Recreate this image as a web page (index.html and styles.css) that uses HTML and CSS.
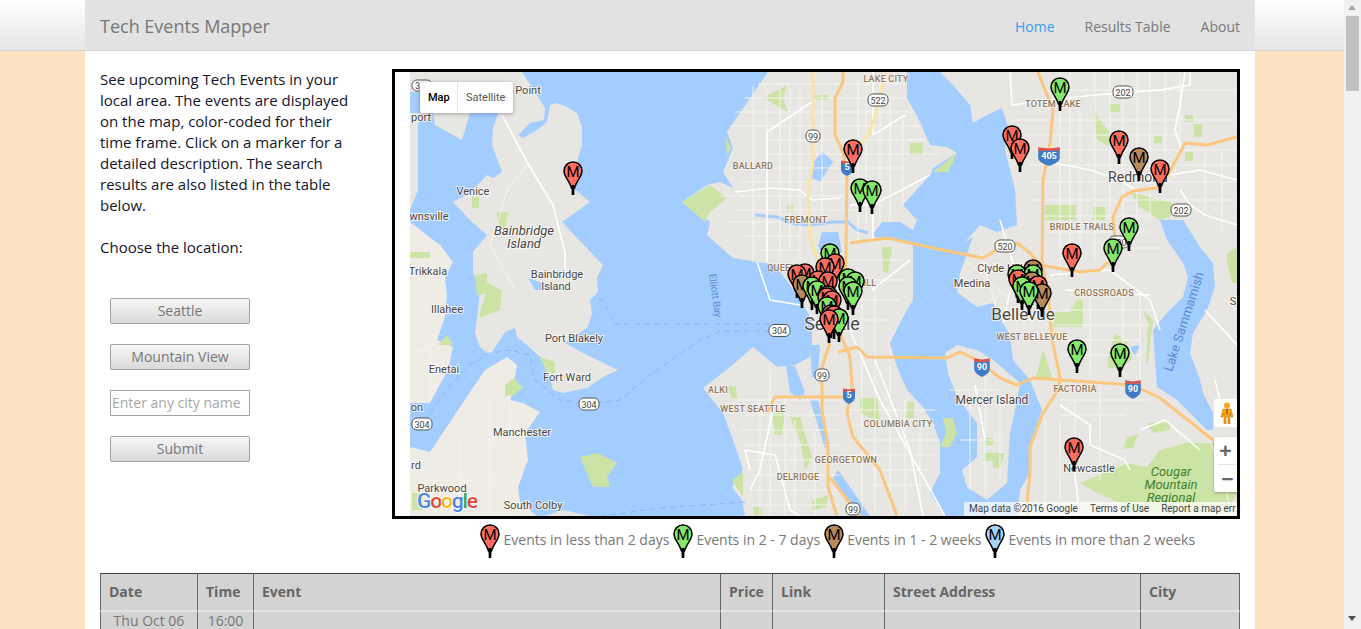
FILE: index.html
```html
<!DOCTYPE html>
<html lang="en">
<head>
  <meta charset="UTF-8">
  <title>Tech Events Mapper</title>
  <link rel="stylesheet" href="styles.css">
</head>
<body>
  <div class="page">
    <nav class="navbar">
      <div class="nav-inner">
        <a class="brand">Tech Events Mapper</a>
        <ul class="nav-links">
          <li class="active">Home</li>
          <li>Results Table</li>
          <li>About</li>
        </ul>
      </div>
    </nav>

    <div class="container">
      <div class="row">
        <div class="intro">
          <p>See upcoming Tech Events in your local area. The events are displayed on the map, color-coded for their time frame. Click on a marker for a detailed description. The search results are also listed in the table below.<br><br>Choose the location:</p>
          <div class="controls">
            <button>Seattle</button>
            <button>Mountain View</button>
            <input type="text" placeholder="Enter any city name">
            <button>Submit</button>
          </div>
        </div>

        <div class="map-col">
          <div class="map-box">
            <div class="map">
              <svg class="map-svg" width="827" height="444" viewBox="410 72 827 444">
                <defs>
                  <g id="pin">
                    <path class="pin-body" d="M10 1C4.800 1 1 5 1 10c0 5.500 5 9 7.500 17h3C14 19 19 15.500 19 10 19 5 15.200 1 10 1z"/>
                    <path class="pin-stem" d="M8.500 24h3l-.2 10H8.700z"/>
                    <text class="pin-m" x="10" y="15.500">M</text>
                  </g>
                  <g id="i5">
                    <path class="sh-blue" d="M-6-4H6V2C6 6 2 8 0 9-2 8-6 6-6 2z"/>
                    <path class="sh-red" d="M-6-6.500 0-5.500 6-6.500V-3.500H-6z"/>
                  </g>
                </defs>

                <!-- land -->
                <g class="land">
                  <path d="M410 72H500L505 82V113H470L462 140 453 135 435 125 433 113H420V92H410z"/>
                  <path d="M410 113H430V118L418 122V190L410 210z"/>
                  <path class="land-light" d="M410 222 423 232 440 245 453 262 445 278 447 295 445 317 437 340 453 347 448 370 437 390 430 403H410z"/>
                  <path class="land-light" d="M410 447 430 452 440 437 460 407 485 370 507 357 517 365 513 387 510 400 523 403 540 412 525 433 528 460 518 487 520 503 537 516H410z"/>
                  <path d="M563 510 590 516H545z"/>
                  <path d="M498 72H522L537 95 545 108 544 120 530 123 518 135 523 138 537 130 547 122 550 105 557 103 567 107 577 113 582 127 582 145 578 158 574 178 573 188 590 202 562 222 577 238 603 265 597 278 598 292 590 300 592 313 588 327 565 343 583 353 618 370 603 377 587 388 563 393 553 390 550 378 540 357 527 345 517 337 515 328 505 332 490 355 480 347 475 333 478 310 480 290 473 272 473 252 487 235 472 222 453 202 470 193 487 175 493 178 502 172 492 145 493 128 500 108 498 85z"/>
                  <path d="M768 72 757 88 727 132 733 148 723 172 733 188 720 182 707 185 682 202 710 222 707 235 733 258 757 262 775 265 790 285 800 300 812 320 812 340 810 357 795 365 777 367 753 347 730 367 703 388 723 413 733 440 743 470 732 487 742 500 745 516H945L930 493 940 473 940 443 933 423 923 407 907 390 897 367 890 343 903 317 913 300V242L880 238 872 236 882 222 900 222 913 230 917 220 903 205 930 175 933 168 957 153 947 147 930 145 920 122 907 98 907 72z"/>
                  <path d="M945 353 957 345 977 350 993 360 1020 383 1017 400 1010 433 1007 483 987 500 967 487 962 470 977 457 977 423 957 397 948 373z"/>
                  <path d="M940 72 953 85 970 105 973 123 987 115 1002 108 1008 127 1005 150 1010 170 1015 190 1017 225 997 232 980 225 965 242 973 237 960 273 957 292 977 307 993 303 1003 323 1017 347 1010 335 1013 360 1030 380 1042 410 1032 440 1030 473 1020 490 1017 516H1237V72z"/>
                </g>

                <!-- water on the land -->
                <g class="water">
                  <path d="M823 152 833 162 820 182 812 178 813 162z"/>
                  <path d="M528 278 545 284 568 290H535z"/>
                  <path d="M1160 220H1183L1200 247 1213 263 1215 287 1207 310 1193 333 1190 353 1200 380 1203 393 1213 413 1213 430H1207L1177 400 1157 387 1155 360 1153 330 1167 313 1183 297 1188 277 1183 263 1167 240z"/>
                  <path d="M1130 347 1140 345 1135 357z"/>
                  <path d="M810 345H820L818 375 812 378z"/>
                  <path d="M786 366 795 366 805 392 800 400 790 392z"/>
                  <path d="M810 400 818 400 830 445 825 448z"/>
                  <path d="M838 470 870 516H858L833 478z"/>
                  <path d="M822 232 838 232 842 252 826 262 818 246z"/>
                </g>
                <polyline class="canal" points="755,215 777,217 795,224 810,225 833,222 848,222 857,230 868,233"/>
                <polyline class="ferry" points="780,331 720,331 700,340 650,375 620,400 589,404 560,400 535,380 530,355 510,350 490,353 470,365 450,385 422,424"/>
                <polyline class="ferry" points="780,324 615,324 605,305 598,296"/>
                <polyline class="ferry" points="600,516 660,508 745,502"/>

                <!-- parks -->
                <g class="park">
                  <path d="M580 457 598 453 617 463 607 477 610 487 593 487z"/>
                  <path d="M682 202 710 185 727 198 710 212 705 222z"/>
                  <path d="M763 98 787 85 783 98 788 112 767 100z"/>
                  <path d="M725 135 731 148 727 155z"/>
                  <path d="M933 172 957 153 948 172z"/>
                  <path d="M910 143H923L922 155H910z"/>
                  <path d="M812 95H828V100H812z"/>
                  <path d="M497 212H508L505 228H497z"/>
                  <path d="M472 197H479V208H472z"/>
                  <path d="M475 275 487 273V282L503 292 477 295z"/>
                  <path d="M487 290H502L500 310 480 318V312z"/>
                  <path d="M505 385 513 378 523 387 513 396H505z"/>
                  <path d="M540 357 555 362V373H547z"/>
                  <path d="M438 345 447 335 453 345z"/>
                  <path d="M412 493H423V510H412z"/>
                  <path d="M410 252H430V258H410z"/>
                  <path d="M728 387 736 386 737 398 731 398z"/>
                  <path d="M772 413H785L782 435H775z"/>
                  <path d="M790 417H800L812 457 805 470 800 440z"/>
                  <path d="M732 480 743 472V497z"/>
                  <path d="M812 500 828 495 827 507 813 510z"/>
                  <path d="M753 507H762V516H755z"/>
                  <path d="M860 398H877L880 420 868 417 860 412z"/>
                  <path d="M908 402H914V418H906z"/>
                  <path d="M943 418H953L957 433 950 447H940L946 433z"/>
                  <path d="M985 438H993V445H985z"/>
                  <path d="M985 453H1005L1002 461 1000 468H993V461H985z"/>
                  <path d="M882 247H892L888 273 883 272z"/>
                  <path d="M787 205H793V212H787z"/>
                  <path d="M1093 110 1100 120 1110 133V147L1097 140z"/>
                  <path d="M1109 104H1120V112H1109z"/>
                  <path d="M1185 115H1193V122H1185z"/>
                  <path d="M1194 124H1202V137H1194z"/>
                  <path d="M1154 136H1162V143H1154z"/>
                  <path d="M1185 152 1193 152 1193 161 1185 161z"/>
                  <path d="M1130 192 1140 207 1160 220 1170 217 1173 203 1160 200z"/>
                  <path d="M1045 205H1076V220H1045z"/>
                  <path d="M1093 207H1105V220H1093z"/>
                  <path d="M1077 300H1083V327H1053L1055 312H1070z"/>
                  <path d="M1143 310 1153 320 1148 363H1146L1148 323z"/>
                  <path d="M1115 333 1127 343 1133 357 1123 368H1108V357z"/>
                  <path d="M1043 350 1053 380H1035z"/>
                  <path d="M1080 483 1127 463 1147 467 1160 450 1187 443 1213 443 1237 447V493L1227 513H1133L1113 500 1097 493z"/>
                  <path d="M1147 423 1170 422V430L1153 433z"/>
                  <path d="M1127 437 1138 435 1133 448 1123 449z"/>
                  <path d="M1227 253 1237 247V283H1232L1227 263z"/>
                </g>

                <!-- small streets -->
                <path class="street" d="M758 84H905M745 98H905M735 112H915M730 126H920M770 140H925M767 154H940M740 168H905M740 182H890M720 196H880M735 210H860M725 222H780M745 236H800M760 250H800M753 86V262M767 88V262M780 88V262M790 88V250M800 88V262M822 95V220M858 80V240M866 80V230M880 80V220M890 100V220M903 115V205M838 260H905M838 280H905M850 300H900M860 320H890M862 280V510M875 285V510M890 350V510M905 400V510M920 420V500M850 410H935M850 425H935M850 440H940M850 455H935M870 470H930M870 485H930M735 400H840M745 415H840M740 430H840M745 445H840M750 460H840M750 475H840M750 490H840M750 505H840M770 370V516M760 400V516M785 400V516M795 420V516M815 430V516M430 340V400M415 350H430M418 280H440M460 440V516H518M460 440H510M490 400V516M410 480H520M510 395V440M1045 90H1237M1012 120H1237M1010 135H1180M1020 150H1237M1030 165H1237M1030 182H1237M1030 200H1237M1040 216H1150M1040 232H1150M1120 248H1160M1060 72V280M1070 72V260M1080 110V260M1095 72V260M1110 72V220M1123 72V240M1137 72V220M1150 72V220M1165 72V160M1180 72V150M1205 150V210M1222 150V230M1070 295H1150M1060 310H1150M1055 325H1150M1050 340H1140M1060 355H1140M1060 400H1150M1060 415H1125M1100 380V480M1075 400V470M1090 285V375M1123 285V375M1140 290V380M950 390H1000M970 400V490M985 375V495M1000 400V480M960 440H1005M1225 300 1237 310M1210 440 1230 505M1045 420V516M1060 420V500M980 250 1000 320M965 260 1010 300"/>

                <!-- main streets -->
                <g class="road">
                  <polyline points="502,115 527,162 553,205 565,252 565,278"/>
                  <polyline points="767,132 815,100"/>
                  <polyline points="767,132 767,262"/>
                  <polyline points="767,188 800,190 812,200 840,198"/>
                  <polyline points="735,192 770,188"/>
                  <polyline points="873,72 873,135 905,115"/>
                  <polyline points="850,205 873,205 930,175"/>
                  <polyline points="873,205 873,240"/>
                  <polyline points="757,262 770,300 800,305"/>
                  <polyline points="850,330 880,400 925,480 945,516"/>
                  <polyline points="875,360 910,450 923,516"/>
                  <polyline points="872,290 910,260"/>
                  <polyline points="750,470 745,450 775,455 790,510 800,516"/>
                  <polyline points="775,400 760,470 750,490"/>
                  <polyline points="1010,72 1012,105 1050,100 1095,95 1160,90 1190,85 1190,72"/>
                  <polyline points="1040,160 1090,170 1120,180 1135,190"/>
                  <polyline points="1170,175 1200,170 1237,180"/>
                  <polyline points="1180,190 1190,205 1205,215 1237,225"/>
                  <polyline points="1185,72 1180,105 1175,130 1182,150"/>
                  <polyline points="1050,275 1110,270 1150,300 1160,330"/>
                  <polyline points="1065,290 1150,295"/>
                  <polyline points="1205,310 1237,345"/>
                  <polyline points="1215,380 1225,420 1237,420"/>
                  <polyline points="1060,405 1090,425 1090,445 1125,460 1130,470"/>
                  <polyline points="1140,430 1165,420 1200,450"/>
                  <polyline points="1072,450 1078,500 1075,516"/>
                  <polyline points="1000,220 1015,270 1003,323"/>
                  <polyline points="975,385 985,440"/>
                </g>
                <polyline class="street" points="527,165 507,190 497,225 490,245 515,290"/>

                <!-- highways -->
                <g class="hwy">
                  <polyline points="843,72 843,82 835,98 835,135 843,152 847,172 846,252 845,300"/>
                  <polyline points="840,333 850,357 852,387 847,413 853,437 880,470 897,516"/>
                  <polyline points="850,243 887,238 933,248 983,258 997,250 1017,243 1030,253 1040,265 1080,272 1100,270 1110,260 1115,240 1113,217 1122,197 1133,191 1157,188 1167,177 1185,143 1207,145 1237,137"/>
                  <polyline points="1038,72 1053,110 1050,143 1043,180 1042,265 1048,290 1052,340 1060,377 1058,390 1043,413 1030,447 1030,473 1027,503 1027,516"/>
                  <polyline points="838,352 857,347 867,357 947,358 960,352 977,360 1000,378 1017,385 1033,378 1133,385 1160,398 1213,440"/>
                  <polyline points="843,397 775,397 768,412"/>
                  <polyline points="830,343 822,367 822,410 828,447 828,487 837,516"/>
                  <polyline points="830,478 860,516"/>
                </g>
                <g class="hwy-light">
                  <polyline points="813,72 813,165 808,188 810,238 815,252 825,290"/>
                  <polyline points="885,72 877,108 870,132 860,145"/>
                </g>

                <!-- highway shields -->
                <g class="shield">
                  <rect x="412" y="80" width="20" height="11" rx="5"/>
                  <rect x="769" y="324.500" width="21" height="12" rx="5"/>
                  <rect x="579" y="398" width="20" height="12" rx="5"/>
                  <rect x="412" y="418" width="20" height="12" rx="5"/>
                  <rect x="806" y="130" width="14" height="12" rx="5"/>
                  <rect x="815" y="369" width="14" height="12" rx="5"/>
                  <rect x="846" y="503" width="14" height="12" rx="5"/>
                  <rect x="868" y="94" width="20" height="12" rx="5"/>
                  <rect x="995" y="240" width="20" height="12" rx="5"/>
                  <rect x="1113" y="86" width="20" height="12" rx="5"/>
                  <rect x="1171" y="204" width="20" height="12" rx="5"/>
                  <rect x="1109" y="236" width="20" height="12" rx="5"/>
                </g>
                <g class="shield-num">
                  <text x="420" y="89">30</text>
                  <text x="779.500" y="334">304</text>
                  <text x="589" y="407.500">304</text>
                  <text x="422" y="427.500">304</text>
                  <text x="813" y="139.500">99</text>
                  <text x="822" y="378.500">99</text>
                  <text x="853" y="512.500">99</text>
                  <text x="878" y="103.500">522</text>
                  <text x="1005" y="249.500">520</text>
                  <text x="1123" y="95.500">202</text>
                  <text x="1181" y="213.500">202</text>
                  <text x="1119" y="245.500">520</text>
                </g>
                <use href="#i5" x="847" y="167"/>
                <use href="#i5" x="849" y="395"/>
                <use href="#i5" transform="translate(1049 155) scale(1.800 1.200)"/>
                <use href="#i5" transform="translate(982 366) scale(1.300 1.200)"/>
                <use href="#i5" transform="translate(1133 388) scale(1.300 1.200)"/>
                <g class="shield-i">
                  <text x="847" y="170">5</text>
                  <text x="849" y="398">5</text>
                  <text x="1049" y="159">405</text>
                  <text x="982" y="370">90</text>
                  <text x="1133" y="392">90</text>
                </g>

                <!-- place names -->
                <g class="lbl">
                  <text x="528" y="94">Point</text>
                  <text x="421" y="121">port</text>
                  <text x="473" y="195">Venice</text>
                  <text x="429" y="220">wnsville</text>
                  <text x="428" y="275">Trikkala</text>
                  <text x="447" y="313">Illahee</text>
                  <text x="444" y="373">Enetai</text>
                  <text x="417" y="411">on</text>
                  <text x="416" y="469">rd</text>
                  <text x="442" y="492">Parkwood</text>
                  <text x="522" y="436">Manchester</text>
                  <text x="574" y="342">Port Blakely</text>
                  <text x="567" y="381">Fort Ward</text>
                  <text x="533" y="509">South Colby</text>
                  <text x="557" y="278">Bainbridge</text>
                  <text x="556" y="290">Island</text>
                  <text x="1000" y="272">Clyde Hill</text>
                  <text x="972" y="287">Medina</text>
                  <text x="1089" y="472">Newcastle</text>
                  <text x="1233" y="305">S</text>
                  <text class="lbl-md" x="992" y="404">Mercer Island</text>
                  <text class="lbl-rd" x="1138" y="182">Redmond</text>
                  <text class="lbl-sea" x="832" y="330">Seattle</text>
                  <text class="lbl-lg" x="1023" y="320">Bellevue</text>
                  <text class="lbl-it" x="524" y="235">Bainbridge</text>
                  <text class="lbl-it" x="524" y="248">Island</text>
                </g>
                <g class="hood">
                  <text x="753" y="169">BALLARD</text>
                  <text x="806" y="223">FREMONT</text>
                  <text x="782" y="271">QUEEN</text>
                  <text x="870" y="286">ILL</text>
                  <text x="886" y="82">LAKE CITY</text>
                  <text x="1053" y="107">TOTEM LAKE</text>
                  <text x="1082" y="230">BRIDLE TRAILS</text>
                  <text x="1104" y="296">CROSSROADS</text>
                  <text x="1032" y="340">WEST BELLEVUE</text>
                  <text x="1075" y="392">FACTORIA</text>
                  <text x="718" y="393">ALKI</text>
                  <text x="753" y="412">WEST SEATTLE</text>
                  <text x="898" y="427">COLUMBIA CITY</text>
                  <text x="846" y="463">GEORGETOWN</text>
                  <text x="798" y="480">DELRIDGE</text>
                </g>
                <g class="lbl-park">
                  <text x="1171" y="476">Cougar</text>
                  <text x="1171" y="489">Mountain</text>
                  <text x="1171" y="502">Regional</text>
                </g>
                <text class="lbl-water" transform="translate(1188 323) rotate(-72)">Lake Sammamish</text>
                <text class="lbl-water lbl-bay" transform="translate(712 296) rotate(82)">Elliott Bay</text>

                <!-- event markers -->
                <g class="red"><use href="#pin" x="563" y="161"/><use href="#pin" x="843" y="139"/><use href="#pin" x="1002" y="125"/><use href="#pin" x="1010" y="138"/><use href="#pin" x="1109" y="130"/></g>
                <use class="brown" href="#pin" x="1129" y="147"/>
                <use class="red" href="#pin" x="1150" y="159"/>
                <g class="green"><use href="#pin" x="1050" y="77"/><use href="#pin" x="850" y="178"/><use href="#pin" x="862" y="180"/><use href="#pin" x="1119" y="217"/><use href="#pin" x="1103" y="238"/><use href="#pin" x="1067" y="339"/><use href="#pin" x="1110" y="343"/></g>
                <use class="red" href="#pin" x="1062" y="243"/>
                <use class="red" href="#pin" x="1064" y="437"/>

                <use class="green" href="#pin" x="820" y="243"/>
                <use class="red" href="#pin" x="825" y="253"/>
                <use class="red" href="#pin" x="815" y="257"/>
                <use class="red" href="#pin" x="795" y="263"/>
                <use class="red" href="#pin" x="787" y="264"/>
                <use class="brown" href="#pin" x="792" y="274"/>
                <use class="green" href="#pin" x="838" y="268"/>
                <use class="green" href="#pin" x="845" y="271"/>
                <use class="green" href="#pin" x="838" y="276"/>
                <use class="green" href="#pin" x="843" y="281"/>
                <use class="red" href="#pin" x="808" y="270"/>
                <use class="red" href="#pin" x="818" y="271"/>
                <use class="green" href="#pin" x="802" y="276"/>
                <use class="green" href="#pin" x="807" y="280"/>
                <use class="brown" href="#pin" x="818" y="285"/>
                <use class="red" href="#pin" x="817" y="287"/>
                <use class="red" href="#pin" x="822" y="290"/>
                <use class="green" href="#pin" x="817" y="296"/>
                <use class="brown" href="#pin" x="821" y="304"/>
                <use class="red" href="#pin" x="824" y="305"/>
                <use class="green" href="#pin" x="829" y="308"/>
                <use class="red" href="#pin" x="819" y="309"/>

                <use class="brown" href="#pin" x="1023" y="259"/>
                <use class="green" href="#pin" x="1007" y="264"/>
                <use class="green" href="#pin" x="1023" y="264"/>
                <use class="red" href="#pin" x="1008" y="269"/>
                <use class="brown" href="#pin" x="1022" y="271"/>
                <use class="red" href="#pin" x="1028" y="275"/>
                <use class="green" href="#pin" x="1012" y="276"/>
                <use class="brown" href="#pin" x="1032" y="283"/>
                <use class="green" href="#pin" x="1019" y="281"/>

                <!-- google logo -->
                <text class="google" x="417" y="508" textLength="61"><tspan class="g-blue">G</tspan><tspan class="g-red">o</tspan><tspan class="g-yellow">o</tspan><tspan class="g-blue">g</tspan><tspan class="g-green">l</tspan><tspan class="g-red">e</tspan></text>
              </svg>

              <div class="map-type">
                <span class="type-on">Map</span>
                <span>Satellite</span>
              </div>
              <div class="pegman">
                <svg width="14" height="22" viewBox="0 0 14 22">
                  <circle cx="7" cy="3.500" r="3" fill="#f5a915"/>
                  <path d="M3 7h8l2 8h-2l-1-4v11H8v-7H6v7H4V11l-1 4H1z" fill="#f5a915" stroke="#a66f06" stroke-width=".5"/>
                  <path d="M6.300 7h1.400l-.3 6h-.8z" fill="#c0392b"/>
                </svg>
              </div>
              <div class="zoom-ctl">
                <span>+</span>
                <span>−</span>
              </div>
              <div class="attribution">
                <span>Map data ©2016 Google</span>
                <span>Terms of Use</span>
                <span>Report a map err</span>
              </div>
            </div>
          </div>

          <div class="legend">
            <div class="legend-item">
              <svg class="red" width="20" height="34" viewBox="0 0 20 34"><use href="#pin"/></svg>
              <span>Events in less than 2 days</span>
            </div>
            <div class="legend-item">
              <svg class="green" width="20" height="34" viewBox="0 0 20 34"><use href="#pin"/></svg>
              <span>Events in 2 - 7 days</span>
            </div>
            <div class="legend-item">
              <svg class="brown" width="20" height="34" viewBox="0 0 20 34"><use href="#pin"/></svg>
              <span>Events in 1 - 2 weeks</span>
            </div>
            <div class="legend-item">
              <svg class="blue" width="20" height="34" viewBox="0 0 20 34"><use href="#pin"/></svg>
              <span>Events in more than 2 weeks</span>
            </div>
          </div>
        </div>
      </div>

      <table class="results">
        <thead>
          <tr>
            <th class="col-date">Date</th>
            <th class="col-time">Time</th>
            <th class="col-event">Event</th>
            <th class="col-price">Price</th>
            <th class="col-link">Link</th>
            <th class="col-addr">Street Address</th>
            <th class="col-city">City</th>
          </tr>
        </thead>
        <tbody>
          <tr>
            <td>Thu Oct 06</td>
            <td>16:00</td>
            <td></td>
            <td></td>
            <td></td>
            <td></td>
            <td></td>
          </tr>
        </tbody>
      </table>
    </div>
  </div>

  <div class="scrollbar">
    <div class="arrow-up"></div>
    <div class="thumb"></div>
    <div class="arrow-down"></div>
  </div>
</body>
</html>
```

FILE: styles.css
```css
html, body {
  height: 100%;
}

body {
  margin: 0;
  display: flex;
  overflow: hidden;
  background-color: #fde3c2;
  font-family: 'Open Sans', sans-serif;
  font-size: 15px;
  line-height: 21px;
  color: #14142b;
}

.page {
  flex: 1;
  min-width: 0;
}

/* navbar */
.navbar {
  height: 50px;
  background: linear-gradient(to bottom, #ffffff, #e6e6e6);
  border-bottom: 1px solid #d4d4d4;
}

.nav-inner {
  width: 1170px;
  height: 50px;
  margin-left: 85px;
  box-sizing: border-box;
  padding: 0 0 0 15px;
  display: flex;
  justify-content: space-between;
  align-items: center;
  background-color: #e2e2e2;
  color: #777;
}

.brand {
  font-size: 18px;
  margin-top: 2px;
}

.nav-links {
  display: flex;
  margin: 2px 0 0;
  padding: 0;
  list-style: none;
  font-size: 14px;
}

.nav-links li {
  padding: 0 15px;
}

.nav-links .active {
  color: #3b9bf2;
}

/* main */
.container {
  width: 1170px;
  height: 578px;
  margin-left: 85px;
  box-sizing: border-box;
  padding: 18px 15px 0;
  background-color: #fff;
  overflow: hidden;
}

.row {
  display: flex;
}

.intro {
  width: 262px;
  margin-right: 30px;
}

.intro p {
  margin: 0;
}

.controls {
  display: flex;
  flex-direction: column;
  gap: 20px;
  width: 140px;
  margin: 40px 0 0 10px;
}

.controls button,
.controls input {
  box-sizing: border-box;
  width: 140px;
  height: 26px;
  border: 1px solid #a3a3a3;
  border-radius: 2px;
  font-family: 'Open Sans', sans-serif;
  font-size: 14px;
  color: #777;
}

.controls button {
  background: linear-gradient(to bottom, #f7f7f7, #d9d9d9);
  padding: 0 0 2px;
}

.controls input {
  padding: 0 1px 2px;
  border-radius: 0;
  background-color: #fff;
}

.controls input::placeholder {
  color: #a9a9a9;
  opacity: 1;
}

.map-col {
  width: 848px;
}

.map-box {
  height: 450px;
  box-sizing: border-box;
  padding-left: 15px;
  border: 3px solid #000;
}

.map {
  position: relative;
  width: 827px;
  height: 444px;
  overflow: hidden;
  background-color: #a3ccff;
}

/* map drawing */
.map-svg {
  display: block;
  font-family: Roboto, sans-serif;
}

.land { fill: #e8e6e3; }
.land-light { fill: #eeece5; }
.water { fill: #a3ccff; }
.park { fill: #cbe4a6; }

.canal {
  fill: none;
  stroke: #a3ccff;
  stroke-width: 3;
}

.ferry {
  fill: none;
  stroke: #8db7f2;
  stroke-width: 1;
  stroke-dasharray: 6 4;
}

.street {
  fill: none;
  stroke: #f7f6f3;
  stroke-width: .9;
}

.road polyline {
  fill: none;
  stroke: #fff;
  stroke-width: 1.600;
}

.hwy polyline {
  fill: none;
  stroke: #fbc67e;
  stroke-width: 3;
  stroke-linejoin: round;
}

.hwy-light polyline {
  fill: none;
  stroke: #fde39c;
  stroke-width: 2.500;
}

.shield rect {
  fill: #fff;
  stroke: #555;
  stroke-width: 1;
}

.shield-num text {
  font-size: 9px;
  fill: #444;
  text-anchor: middle;
}

.sh-blue { fill: #3f7cc9; }
.sh-red { fill: #d9534a; }

.shield-i text {
  font-size: 9px;
  font-weight: 700;
  fill: #fff;
  text-anchor: middle;
}

.lbl text {
  font-size: 11px;
  fill: #4a453e;
  text-anchor: middle;
  stroke: rgba(255, 255, 255, .75);
  stroke-width: 2px;
  paint-order: stroke;
}

.lbl .lbl-md { font-size: 12px; }
.lbl .lbl-rd { font-size: 14px; }
.lbl .lbl-lg { font-size: 17px; }
.lbl .lbl-sea { font-size: 18px; }
.lbl .lbl-it { font-size: 13px; font-style: italic; }

.hood text {
  font-size: 9px;
  font-weight: 500;
  letter-spacing: .2px;
  fill: #8f7659;
  text-anchor: middle;
  stroke: rgba(255, 255, 255, .6);
  stroke-width: 1.500px;
  paint-order: stroke;
}

.lbl-park text {
  font-size: 13px;
  font-style: italic;
  fill: #3d8128;
  text-anchor: middle;
}

.lbl-water {
  font-size: 13px;
  fill: #5a8fd6;
  text-anchor: middle;
}

.lbl-bay {
  font-size: 10px;
}

.google {
  font-family: Roboto, sans-serif;
  font-size: 21px;
  font-weight: 500;
  stroke: rgba(255, 255, 255, .8);
  stroke-width: 2px;
  paint-order: stroke;
}

.g-blue { fill: #4a86e8; }
.g-red { fill: #e8453c; }
.g-yellow { fill: #f5bb12; }
.g-green { fill: #34a853; }

/* markers */
.pin-body {
  stroke: #000;
  stroke-width: 1.500;
}

.pin-stem { fill: #000; }

.pin-m {
  font-family: Roboto, sans-serif;
  font-size: 15px;
  fill: #000;
  text-anchor: middle;
}

.red { fill: #fd6e5f; }
.green { fill: #86e86b; }
.brown { fill: #b98a5e; }
.blue { fill: #a8d4fb; }

/* map controls */
.map-type {
  position: absolute;
  left: 10px;
  top: 10px;
  display: flex;
  height: 31px;
  background-color: #fff;
  border-radius: 2px;
  box-shadow: 0 1px 4px rgba(0, 0, 0, .3);
  font-family: Roboto, sans-serif;
  font-size: 11px;
  line-height: 31px;
  color: #565656;
}

.map-type span {
  padding: 0 8px;
}

.map-type .type-on {
  width: 38px;
  box-sizing: border-box;
  text-align: center;
  color: #000;
  font-weight: 500;
  border-right: 1px solid #e6e6e6;
}

.pegman {
  position: absolute;
  left: 804px;
  top: 327px;
  width: 28px;
  height: 28px;
  display: flex;
  align-items: center;
  justify-content: center;
  padding-right: 2px;
  box-sizing: border-box;
  background-color: #fff;
  border-radius: 2px;
}

.pegman svg {
  display: block;
}

.zoom-ctl {
  position: absolute;
  left: 804px;
  top: 365px;
  width: 28px;
  height: 55px;
  box-sizing: border-box;
  padding-right: 5px;
  background-color: #fff;
  border-radius: 2px;
  box-shadow: 0 1px 3px rgba(0, 0, 0, .3);
  font-family: 'Liberation Sans', sans-serif;
  font-size: 21px;
  font-weight: 700;
  line-height: 27px;
  text-align: center;
  color: #666;
}

.zoom-ctl span {
  display: block;
}

.zoom-ctl span + span {
  border-top: 1px solid #e6e6e6;
  margin-left: 4px;
}

.attribution {
  position: absolute;
  left: 554px;
  bottom: 0;
  width: 273px;
  height: 14px;
  display: flex;
  padding-left: 5px;
  box-sizing: border-box;
  background-color: rgba(255, 255, 255, .7);
  font-family: Roboto, sans-serif;
  font-size: 10px;
  line-height: 14px;
  color: #444;
  white-space: nowrap;
}

.attribution span {
  margin-right: 12px;
}

/* legend */
.legend {
  display: flex;
  gap: 3.500px;
  margin-top: 5px;
  padding-left: 88px;
  font-size: 14px;
  color: #777;
}

.legend-item {
  display: flex;
  align-items: center;
  gap: 3.500px;
  white-space: nowrap;
}

.legend-item svg {
  display: block;
  flex: none;
}

.legend-item span {
  margin-bottom: 4px;
}

/* results table */
.results {
  width: 1140px;
  margin-top: 15px;
  border-collapse: separate;
  border-spacing: 0;
  table-layout: fixed;
  font-size: 14px;
  color: #777;
}

.results th,
.results td {
  background-color: #d3d3d3;
  border-left: 1px solid #666;
}

.results th:last-child,
.results td:last-child {
  border-right: 1px solid #666;
}

.results th {
  box-sizing: border-box;
  height: 39px;
  padding: 0 8px 2px;
  text-align: left;
  color: #666;
  border-top: 1px solid #444;
  border-bottom: 2px solid #e2e2e2;
}

.results td {
  height: 17px;
  padding: 1px 0 0;
  line-height: 16px;
  text-align: center;
  vertical-align: top;
}

.col-date { width: 97px; }
.col-time { width: 56px; }
.col-event { width: 467px; }
.col-price { width: 52px; }
.col-link { width: 112px; }
.col-addr { width: 256px; }
.col-city { width: 100px; }

/* fake page scrollbar */
.scrollbar {
  position: relative;
  flex: none;
  width: 17px;
  background-color: #f1f1f1;
}

.thumb {
  position: absolute;
  left: 2px;
  top: 16px;
  width: 13px;
  height: 75px;
  background-color: #c1c1c1;
}

.arrow-up {
  position: absolute;
  left: 4px;
  top: 5px;
  border: 4.500px solid transparent;
  border-top: 0;
  border-bottom: 5px solid #a3a3a3;
}

.arrow-down {
  position: absolute;
  left: 4px;
  top: 616px;
  border: 4.500px solid transparent;
  border-bottom: 0;
  border-top: 5px solid #505050;
}
```
